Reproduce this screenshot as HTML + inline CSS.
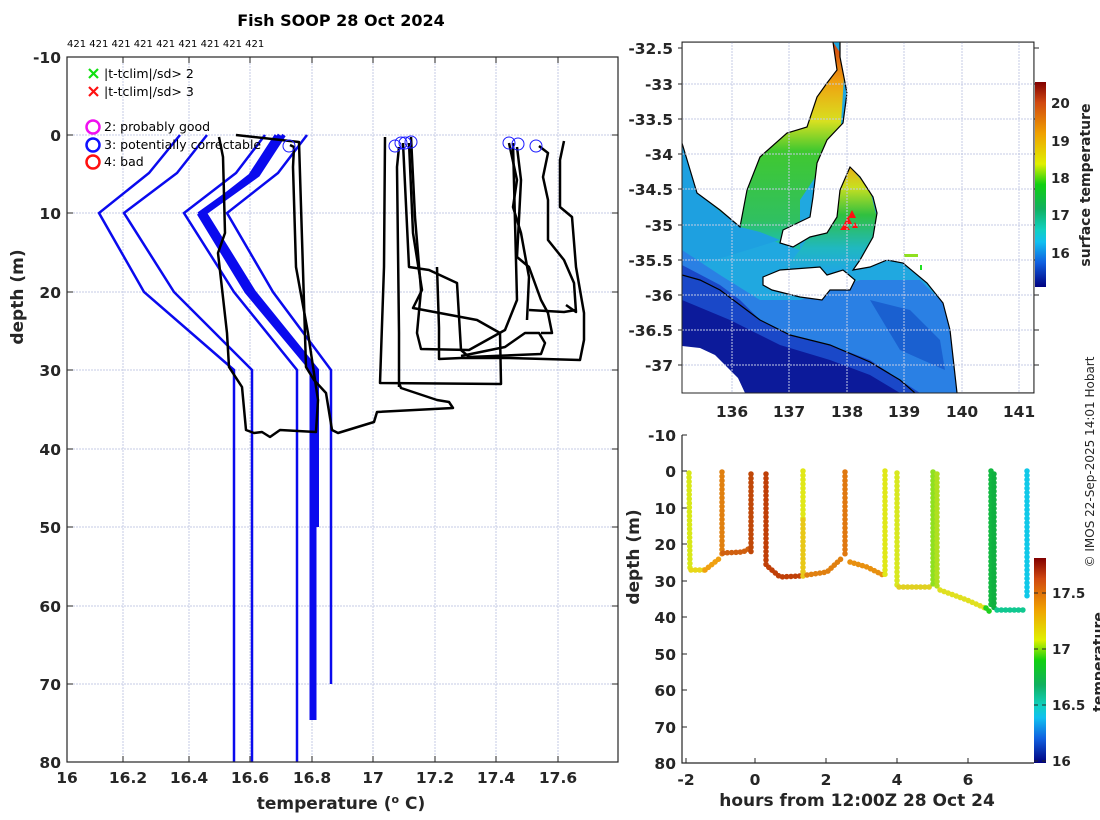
<!DOCTYPE html>
<html><head><meta charset="utf-8"><style>
html,body{margin:0;padding:0;background:#fff;}
svg{display:block;font-family:"DejaVu Sans","Liberation Sans",sans-serif;}
.tk{font-size:15.5px;font-weight:bold;fill:#262626;}
.g{stroke:#c4cbe4;stroke-width:1;stroke-dasharray:2 1;}
</style></head><body>
<svg width="1100" height="820" viewBox="0 0 1100 820" xmlns="http://www.w3.org/2000/svg">
<defs>
<linearGradient id="jet" x1="0" y1="0" x2="0" y2="1">
<stop offset="0" stop-color="#800000"/><stop offset="0.1" stop-color="#d04810"/><stop offset="0.25" stop-color="#f0a000"/><stop offset="0.4" stop-color="#e0f000"/><stop offset="0.5" stop-color="#10d010"/><stop offset="0.62" stop-color="#10b060"/><stop offset="0.72" stop-color="#10d0c0"/><stop offset="0.78" stop-color="#10c0f0"/><stop offset="0.88" stop-color="#1060e0"/><stop offset="1" stop-color="#000080"/>
</linearGradient>
<linearGradient id="sg" x1="0" y1="42" x2="0" y2="240" gradientUnits="userSpaceOnUse">
<stop offset="0" stop-color="#d04010"/><stop offset="0.2" stop-color="#f0a010"/><stop offset="0.4" stop-color="#d8e020"/><stop offset="0.55" stop-color="#40c830"/><stop offset="0.9" stop-color="#30c060"/><stop offset="1" stop-color="#20c0a0"/>
</linearGradient>
<linearGradient id="gv" x1="0" y1="160" x2="0" y2="270" gradientUnits="userSpaceOnUse">
<stop offset="0" stop-color="#f0a010"/><stop offset="0.25" stop-color="#c8e020"/><stop offset="0.5" stop-color="#30c040"/><stop offset="0.8" stop-color="#20b8c0"/><stop offset="1" stop-color="#20a8e0"/>
</linearGradient>
</defs>

<text x="341" y="26" text-anchor="middle" style="font-size:16px;font-weight:bold" fill="#000">Fish SOOP 28 Oct 2024</text>
<text x="67" y="47" style="font-size:10px" fill="#000">421 421 421 421 421 421 421 421 421</text>
<g class="g">
<line x1="123" y1="57" x2="123" y2="762"/><line x1="189" y1="57" x2="189" y2="762"/><line x1="250" y1="57" x2="250" y2="762"/><line x1="312" y1="57" x2="312" y2="762"/><line x1="373" y1="57" x2="373" y2="762"/><line x1="435" y1="57" x2="435" y2="762"/><line x1="496" y1="57" x2="496" y2="762"/><line x1="558" y1="57" x2="558" y2="762"/>
<line x1="67" y1="135" x2="618" y2="135"/><line x1="67" y1="213" x2="618" y2="213"/><line x1="67" y1="292" x2="618" y2="292"/><line x1="67" y1="370" x2="618" y2="370"/><line x1="67" y1="449" x2="618" y2="449"/><line x1="67" y1="527" x2="618" y2="527"/><line x1="67" y1="606" x2="618" y2="606"/><line x1="67" y1="684" x2="618" y2="684"/>
</g>
<g fill="none" stroke="#0a0aee" stroke-width="2.5" stroke-linejoin="miter">
<polyline points="180,135 149,173 99,213 144,292 234,370 234,762"/>
<polyline points="207,135 177,173 124,213 174,292 252,370 252,762"/>
<polyline points="265,135 236,173 184,213 234,292 297,370 297,762"/>
<polyline points="307,135 278,173 227,213 273,292 331,370 331,684"/>
<polyline points="280,135 254,175 201,213 250,292 314,370 314,720" stroke-width="5"/>
<polyline points="284,135 258,175 205,213 254,292 317,370 317,527" stroke-width="4"/>
<polyline points="276,135 250,175 199,215 246,292 311,370 311,720" stroke-width="3"/>
</g>
<g fill="none" stroke="#000" stroke-width="2.5" stroke-linejoin="round">
<polyline points="219,137 223,157 225,233 218,253 227,333 229,367 242,387 246,430 254,433 262,432 270,437 280,430 316,432 318,400 308,333 296,267 293,167 294,147 290,145"/>
<polyline points="236,135 299,142 306,367 314,380 326,393 332,430 338,433 374,422 377,412 453,408 449,402 437,400 401,388 399,383"/>
<polyline points="385,137 384,267 380,383 501,384 500,333 477,320 413,308 422,290 413,233 409,143"/>
<polyline points="399,387 399,333 397,167 399,147"/>
<polyline points="403,143 409,267 429,270 457,283 461,350 469,357 541,354 545,343 539,333 525,333 505,347 461,356"/>
<polyline points="411,137 415,217 421,290 417,333 421,349 469,350 505,330 517,300 513,143"/>
<polyline points="509,143 517,180 513,207 521,233 529,277 527,320"/>
<polyline points="517,147 521,180 517,257 529,267 541,300 548,313 552,333 541,333"/>
<polyline points="539,146 548,153 543,177 548,200 548,240 564,260 574,283 576,312 566,305"/>
<polyline points="564,141 560,160 560,207 572,217 576,267 584,313 584,340 580,360 509,358 461,358 439,359 439,328 437,267"/>
<polyline points="529,310 564,312 576,310"/>
</g>
<g fill="none" stroke="#1a1aff" stroke-width="1">
<circle cx="289" cy="146" r="6"/><circle cx="395" cy="146" r="6"/><circle cx="401" cy="143" r="6"/><circle cx="405" cy="143" r="6"/><circle cx="411" cy="142" r="6"/><circle cx="509" cy="143" r="6"/><circle cx="518" cy="144" r="6"/><circle cx="536" cy="146" r="6"/>
</g>
<g stroke-width="2.2">
<path d="M89,69 l9,9 M98,69 l-9,9" stroke="#10e010"/>
<path d="M89,87 l9,9 M98,87 l-9,9" stroke="#ff1010"/>
</g>
<g fill="none" stroke-width="2.5">
<circle cx="93" cy="127" r="6.5" stroke="#f010f0"/><circle cx="93" cy="145" r="6.5" stroke="#1010ff"/><circle cx="93" cy="162" r="6.5" stroke="#ff1010"/>
</g>
<g style="font-size:12.5px" fill="#000">
<text x="104" y="78">|t-tclim|/sd&gt; 2</text>
<text x="104" y="96">|t-tclim|/sd&gt; 3</text>
<text x="104" y="131">2: probably good</text>
<text x="104" y="149">3: potentially correctable</text>
<text x="104" y="166">4: bad</text>
</g>
<rect x="67" y="57" width="551" height="705" fill="none" stroke="#262626" stroke-width="1.2"/>
<g stroke="#262626" stroke-width="1">
<path d="M123,762v-6M189,762v-6M250,762v-6M312,762v-6M373,762v-6M435,762v-6M496,762v-6M558,762v-6M123,57v6M189,57v6M250,57v6M312,57v6M373,57v6M435,57v6M496,57v6M558,57v6"/>
<path d="M67,135h6M67,213h6M67,292h6M67,370h6M67,449h6M67,527h6M67,606h6M67,684h6M618,135h-6M618,213h-6M618,292h-6M618,370h-6M618,449h-6M618,527h-6M618,606h-6M618,684h-6"/>
</g>
<g class="tk" text-anchor="end">
<text x="61" y="63">-10</text><text x="61" y="141">0</text><text x="61" y="219">10</text><text x="61" y="298">20</text><text x="61" y="376">30</text><text x="61" y="455">40</text><text x="61" y="533">50</text><text x="61" y="612">60</text><text x="61" y="690">70</text><text x="61" y="768">80</text>
</g>
<g class="tk" text-anchor="middle">
<text x="67" y="783">16</text><text x="128" y="783">16.2</text><text x="189" y="783">16.4</text><text x="250" y="783">16.6</text><text x="312" y="783">16.8</text><text x="373" y="783">17</text><text x="435" y="783">17.2</text><text x="496" y="783">17.4</text><text x="558" y="783">17.6</text>
</g>
<text x="341" y="809" text-anchor="middle" class="tk" style="font-size:17px">temperature (<tspan dy="-6" style="font-size:11px">o</tspan><tspan dy="6"> C)</tspan></text>
<text transform="translate(23,297) rotate(-90)" text-anchor="middle" class="tk" style="font-size:17px">depth (m)</text>

<svg x="682" y="42" width="352" height="351" viewBox="682 42 352 351" overflow="hidden">
<rect x="682" y="42" width="352" height="351" fill="#20a8e0"/>
<polygon points="682,180 740,230 800,250 800,200 840,140 845,60 833,42 682,42" fill="url(#sg)"/>
<polygon points="682,143 697,193 740,227 760,232 780,240 682,270" fill="#1ea0e0"/>
<polygon points="800,250 850,167 870,190 880,230 860,275 780,275" fill="url(#gv)"/>
<polygon points="682,250 720,275 760,300 800,300 860,280 920,280 960,320 960,393 682,393" fill="#2a80e4"/>
<polygon points="870,300 910,310 940,340 945,370 900,350" fill="#1a60d0"/>
<polygon points="682,265 720,285 740,300 760,320 790,335 830,345 870,360 900,380 920,393 682,393" fill="#1a48c8"/>
<polygon points="682,300 730,320 780,345 830,360 870,375 900,393 682,393" fill="#0c1a9a"/>
<polygon points="682,346 700,348 715,355 725,365 738,378 745,393 682,393" fill="#ffffff"/>
<g fill="#fff" stroke="#000" stroke-width="1.2">
<polygon points="682,42 833,42 837,70 827,83 817,97 807,127 787,133 760,157 747,190 740,227 720,210 697,193 682,143"/>
<polygon points="840,42 1034,42 1034,393 957,393 953,357 950,330 943,303 927,283 903,263 887,260 870,267 853,270 860,260 873,237 877,213 873,197 860,177 850,167 840,190 837,217 827,233 810,237 793,247 780,243 783,230 810,217 813,197 817,163 827,140 843,123 847,93 840,57"/>
<polygon points="763,277 780,270 820,267 827,275 843,270 855,280 850,290 830,290 822,300 800,297 772,290 763,285"/>
</g>
<polyline points="682,275 700,280 720,290 740,305 760,320 790,335 830,345 870,362 900,380 915,393" fill="none" stroke="#000" stroke-width="1.2"/>
<rect x="904" y="254" width="14" height="3" fill="#90e020"/><rect x="920" y="265" width="2" height="5" fill="#20e020"/>
<g fill="#ff1010"><polygon points="848,216 852,224 844,224"/><polygon points="852,210 856,218 848,218"/><polygon points="845,223 850,230 840,230"/><polygon points="855,222 858,228 852,228"/></g>
<g class="g">
<line x1="732" y1="42" x2="732" y2="393"/><line x1="789" y1="42" x2="789" y2="393"/><line x1="847" y1="42" x2="847" y2="393"/><line x1="904" y1="42" x2="904" y2="393"/><line x1="962" y1="42" x2="962" y2="393"/><line x1="1019" y1="42" x2="1019" y2="393"/>
<line x1="682" y1="84" x2="1034" y2="84"/><line x1="682" y1="119" x2="1034" y2="119"/><line x1="682" y1="154" x2="1034" y2="154"/><line x1="682" y1="189" x2="1034" y2="189"/><line x1="682" y1="225" x2="1034" y2="225"/><line x1="682" y1="260" x2="1034" y2="260"/><line x1="682" y1="295" x2="1034" y2="295"/><line x1="682" y1="330" x2="1034" y2="330"/><line x1="682" y1="365" x2="1034" y2="365"/>
</g>
</svg>
<rect x="682" y="42" width="352" height="351" fill="none" stroke="#262626" stroke-width="1"/>
<g stroke="#262626"><path d="M1034,48h5M1034,84h5M1034,119h5M1034,154h5M1034,189h5M1034,225h5M1034,260h5M1034,295h5M1034,330h5M1034,365h5M682,48h-4M682,84h-4M682,119h-4M682,154h-4M682,189h-4M682,225h-4M682,260h-4M682,295h-4M682,330h-4M682,365h-4"/></g>
<g class="tk" text-anchor="end">
<text x="673" y="54">-32.5</text><text x="673" y="90">-33</text><text x="673" y="125">-33.5</text><text x="673" y="160">-34</text><text x="673" y="195">-34.5</text><text x="673" y="231">-35</text><text x="673" y="266">-35.5</text><text x="673" y="301">-36</text><text x="673" y="336">-36.5</text><text x="673" y="371">-37</text>
</g>
<g class="tk" text-anchor="middle">
<text x="732" y="417">136</text><text x="789" y="417">137</text><text x="847" y="417">138</text><text x="904" y="417">139</text><text x="962" y="417">140</text><text x="1019" y="417">141</text>
</g>
<rect x="1035" y="82" width="11" height="205" fill="url(#jet)"/>
<g class="tk" style="font-size:13.5px">
<text x="1051" y="108">20</text><text x="1051" y="146">19</text><text x="1051" y="183">18</text><text x="1051" y="220">17</text><text x="1051" y="258">16</text>
</g>
<text transform="translate(1090,185) rotate(-90)" text-anchor="middle" class="tk" style="font-size:14px">surface temperature</text>
<text transform="translate(1094,462) rotate(-90)" text-anchor="middle" style="font-size:12px" fill="#262626">© IMOS 22-Sep-2025 14:01 Hobart</text>

<path d="M682,435V763H1034" fill="none" stroke="#262626" stroke-width="1.2"/>
<g stroke="#262626"><path d="M682,435h5M682,471h5M682,508h5M682,544h5M682,581h5M682,617h5M682,654h5M682,690h5M682,727h5M686,763v-5M755,763v-5M826,763v-5M897,763v-5M968,763v-5"/></g>
<g class="tk" text-anchor="end">
<text x="676" y="441">-10</text><text x="676" y="477">0</text><text x="676" y="514">10</text><text x="676" y="550">20</text><text x="676" y="587">30</text><text x="676" y="623">40</text><text x="676" y="660">50</text><text x="676" y="696">60</text><text x="676" y="733">70</text><text x="676" y="769">80</text>
</g>
<g class="tk" text-anchor="middle">
<text x="686" y="785">-2</text><text x="755" y="785">0</text><text x="826" y="785">2</text><text x="897" y="785">4</text><text x="968" y="785">6</text>
</g>
<text x="857" y="806" text-anchor="middle" class="tk" style="font-size:17px">hours from 12:00Z 28 Oct 24</text>
<text transform="translate(639,557) rotate(-90)" text-anchor="middle" class="tk" style="font-size:17px">depth (m)</text>
<g fill="none" stroke-width="5.5" stroke-linecap="round" stroke-dasharray="0.1 4.2" stroke-linejoin="round">
<polyline points="689,473 690,570" stroke="#d8e818"/>
<polyline points="691,570 705,570" stroke="#e8d818"/>
<polyline points="705,570 720,558" stroke="#f0a010"/>
<polyline points="722,472 722,558" stroke="#e08010"/>
<polyline points="723,553 743,552 750,548" stroke="#d06010"/>
<polyline points="751,474 751,555" stroke="#c04808"/>
<polyline points="766,474 766,565 780,577 800,576" stroke="#c04008"/>
<polyline points="803,471 803,520" stroke="#e0e818"/>
<polyline points="803,520 803,576" stroke="#e8c818"/>
<polyline points="807,575 827,572 843,557" stroke="#e08010"/>
<polyline points="845,472 845,557" stroke="#e07810"/>
<polyline points="850,562 867,567 883,575" stroke="#e89010"/>
<polyline points="885,471 885,575" stroke="#e0e818"/>
<polyline points="897,473 897,586" stroke="#d8e820"/>
<polyline points="899,587 932,587" stroke="#e0d020"/>
<polyline points="933,472 933,587" stroke="#90e020"/>
<polyline points="937,474 937,590" stroke="#b0e020"/>
<polyline points="940,590 967,600 985,608" stroke="#e0e020"/>
<polyline points="986,608 990,612" stroke="#20d020"/>
<polyline points="991,471 991,605" stroke="#10b840"/>
<polyline points="994,474 994,608" stroke="#10b040"/>
<polyline points="997,610 1023,610" stroke="#10c890"/>
<polyline points="1027,471 1027,600" stroke="#10c8e8"/>
</g>
<rect x="1034" y="558" width="12" height="205" fill="url(#jet)"/>
<g stroke="#262626"><path d="M1034,593h4M1034,649h4M1034,705h4M1034,761h4M1046,593h-4M1046,649h-4M1046,705h-4M1046,761h-4"/></g>
<g class="tk" style="font-size:13.5px">
<text x="1052" y="598">17.5</text><text x="1052" y="654">17</text><text x="1052" y="710">16.5</text><text x="1052" y="766">16</text>
</g>
<text transform="translate(1103,662) rotate(-90)" text-anchor="middle" class="tk" style="font-size:14px">temperature</text>
</svg>
</body></html>
